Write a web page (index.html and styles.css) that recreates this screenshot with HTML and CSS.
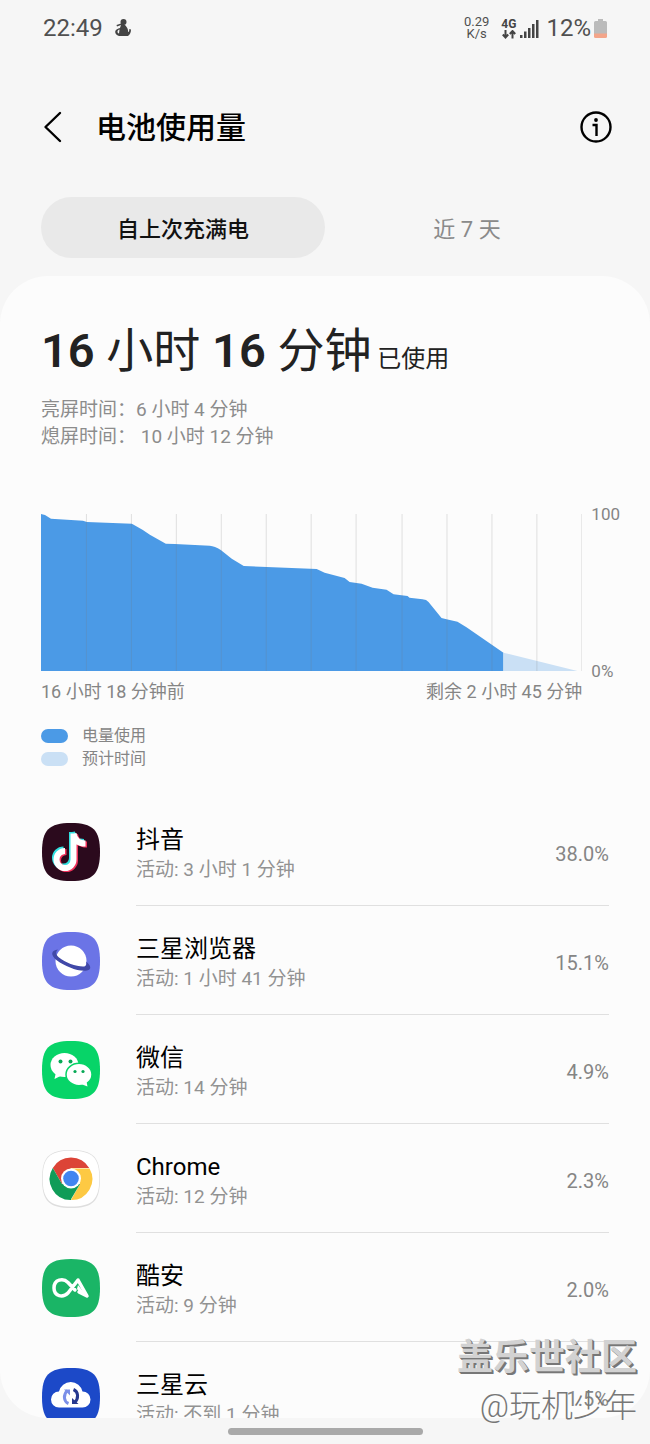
FILE: index.html
```html
<!DOCTYPE html>
<html lang="zh-CN">
<head>
<meta charset="utf-8">
<meta name="viewport" content="width=device-width, initial-scale=1">
<title>电池使用量</title>
<link rel="stylesheet" href="styles.css">
</head>
<body>
<div class="screen">
  <div class="status">
    <span class="clock">22:49</span>
    <svg class="notice" width="16" height="18" viewBox="0 0 16 18" aria-hidden="true"><circle cx="8.500" cy="3" r="3"/><path d="M1.500 6l6-2 3 2.500c1.500 2 3 4 2.500 6.500 1 0 1.300-1.300 1.300-3l1.700.5c0 3-1 5-3 6.500H4C1.500 16.500 0 14.500 .2 12.500S3 9.500 5 9l1-3-4 1.500z"/><path d="M2.500 12.500c0-1 1-2 2-2l-.5 4c-1 0-1.500-1-1.500-2z" fill="#f6f6f6"/></svg>
    <span class="speed">0.29<br>K/s</span>
    <span class="network">4G
      <svg width="14" height="9" viewBox="0 0 14 9" aria-hidden="true"><path d="M3.500 0v7M.8 4.500l2.700 3 2.700-3M10.500 8.500v-7M7.800 4l2.700-3 2.700 3" fill="none" stroke="#444" stroke-width="2"/></svg>
    </span>
    <svg class="signal" width="19" height="19" viewBox="0 0 19 19" aria-hidden="true"><path d="M0 16h2.500v3H0zM4 12.500h2.500V19H4zM8 9h2.500v10H8zM12 5h2.500v14H12zM16 1h2.500v18H16z" fill="#444"/></svg>
    <span class="level">12%</span>
    <svg width="13" height="19" viewBox="0 0 13 19" aria-hidden="true"><path d="M4 0h5v2h2.500a1.500 1.500 0 0 1 1.500 1.500V15H0V3.500A1.500 1.500 0 0 1 1.500 2H4z" fill="#bbb"/><path d="M0 14.500h13v3a1.500 1.500 0 0 1-1.500 1.500h-10A1.500 1.500 0 0 1 0 17.500z" fill="#f3a58a"/></svg>
  </div>

  <header class="bar">
    <button class="icon-button" type="button" aria-label="返回"><svg width="20" height="32" viewBox="0 0 20 32"><path d="M18 2L3.500 16 18 30" fill="none" stroke="#000" stroke-width="2.400" stroke-linecap="round" stroke-linejoin="round"/></svg></button>
    <h1 class="title">电池使用量</h1>
    <button class="icon-button" type="button" aria-label="信息"><svg width="32" height="32" viewBox="0 0 32 32"><circle cx="16" cy="16" r="14.500" fill="none" stroke="#000" stroke-width="2.400"/><circle cx="16" cy="9" r="1.900"/><path d="M12.500 14h4v11" fill="none" stroke="#000" stroke-width="2.400"/></svg></button>
  </header>

  <nav class="tabs">
    <button class="tab tab-active" type="button" aria-pressed="true">自上次充满电</button>
    <button class="tab" type="button" aria-pressed="false">近 7 天</button>
  </nav>

  <main class="card">
    <h2 class="total"><b>16</b> 小时 <b>16</b> 分钟<small> 已使用</small></h2>
    <p class="times">亮屏时间：6 小时 4 分钟<br>熄屏时间： 10 小时 12 分钟</p>

    <section class="chart">
      <svg class="plot" viewBox="0 0 542 157" preserveAspectRatio="none" role="img" aria-label="电量使用">
        <path d="M0 0L4 1 10 4.700 42 6.700 46 8 91 9.700 102 16 109 20.700 125 29.700 134 30 169 31.700Q174 32 180 36L191 44.700 203 52 226 53 276 55 284 58.700 304 64 309 68 321 69.700 332 73.700 346 75.700 353 80.300 367 82 369 83.700 382 85.300Q386 85.500 388 88L401 104 406 105.300 417 107.700 426 113.300 463 138.700V157H0z" fill="#4b9ae6"/>
        <path d="M463 138.700L537 157H463z" fill="#cae0f5"/>
        <path d="M45.500 0V157M90.500 0V157M135.500 0V157M180.500 0V157M225.500 0V157M270.500 0V157M315.500 0V157M361.500 0V157M406.500 0V157M451.500 0V157M496.500 0V157M541.500 0V157" stroke="#7a7a7a" stroke-opacity=".22"/>
      </svg>
      <div class="scale"><span>100</span><span>0%</span></div>
      <div class="range"><span>16 小时 18 分钟前</span><span>剩余 2 小时 45 分钟</span></div>
    </section>
    <ul class="legend">
      <li><i class="swatch"></i>电量使用</li>
      <li><i class="swatch swatch-light"></i>预计时间</li>
    </ul>

    <ul class="apps">
      <li class="app">
        <svg class="app-icon" viewBox="0 0 58 58" aria-hidden="true"><path d="M29 0C51 0 58 7 58 29S51 58 29 58 0 51 0 29 7 0 29 0z" fill="#2b0a1d"/><g fill="none" stroke-width="6"><path d="M31 10v26a8.500 8.500 0 1 1-8.500-8.500M31 10c1 7 5 10 12 10" stroke="#30dfe0" transform="translate(-1 -1)"/><path d="M31 10v26a8.500 8.500 0 1 1-8.500-8.500M31 10c1 7 5 10 12 10" stroke="#f0325b" transform="translate(2 1.500)"/><path d="M31 10v26a8.500 8.500 0 1 1-8.500-8.500M31 10c1 7 5 10 12 10" stroke="#fff" transform="translate(.5 .5)"/></g></svg>
        <div class="app-row"><div><h3 class="app-name">抖音</h3><p class="app-time">活动: 3 小时 1 分钟</p></div><span class="percent">38.0%</span></div>
      </li>
      <li class="app">
        <svg class="app-icon" viewBox="0 0 58 58" aria-hidden="true"><path d="M29 0C51 0 58 7 58 29S51 58 29 58 0 51 0 29 7 0 29 0z" fill="#6b74e6"/><circle cx="29" cy="29" r="15.500" fill="#fff"/><path d="M16 17.500C9 18 8 23 15 28.500c8 6 22 11.500 30 10 5-1 4-5-1-9 1 3 0 5-3 5-7 0-18-4-24-9-3-3-4-5-1-8z" fill="#4149a8"/></svg>
        <div class="app-row"><div><h3 class="app-name">三星浏览器</h3><p class="app-time">活动: 1 小时 41 分钟</p></div><span class="percent">15.1%</span></div>
      </li>
      <li class="app">
        <svg class="app-icon" viewBox="0 0 58 58" aria-hidden="true"><path d="M29 0C51 0 58 7 58 29S51 58 29 58 0 51 0 29 7 0 29 0z" fill="#07d468"/><ellipse cx="22.500" cy="24" rx="14" ry="12" fill="#fff"/><path d="M14 31l-1.500 7 7-3.500z" fill="#fff"/><ellipse cx="37" cy="33.500" rx="13" ry="11.200" fill="#fff" stroke="#07d468" stroke-width="1.500"/><path d="M39 43l6.500 2.500-1-5z" fill="#fff"/><g fill="#07a956"><circle cx="18.500" cy="20.500" r="2"/><circle cx="28.500" cy="20.500" r="2"/><circle cx="33" cy="30.500" r="1.600"/><circle cx="41" cy="30.500" r="1.600"/></g></svg>
        <div class="app-row"><div><h3 class="app-name">微信</h3><p class="app-time">活动: 14 分钟</p></div><span class="percent">4.9%</span></div>
      </li>
      <li class="app">
        <svg class="app-icon" viewBox="0 0 58 58" aria-hidden="true"><path d="M29 0C51 0 58 7 58 29S51 58 29 58 0 51 0 29 7 0 29 0z" fill="#dedede"/><path d="M29 .7C50.500 .7 57.300 7.500 57.300 28.500S50.500 56.500 29 56.500 .7 49.500 .7 28.500 7.500 .7 29 .7z" fill="#fff"/><path d="M10.800 18A21 21 0 0 1 47.200 18H29L20 34z" fill="#dc4437"/><path d="M10.800 18L20 34 29 39 29 50A21 21 0 0 1 10.800 18z" fill="#109c58"/><path d="M29 18.500H47.500A21 21 0 0 1 29 50L38 34z" fill="#fdc943"/><path d="M20 34l18 0-9.500 16z" fill="#109c58"/><circle cx="29" cy="28.500" r="10" fill="#fff"/><circle cx="29" cy="28.500" r="7.800" fill="#4285f0"/></svg>
        <div class="app-row"><div><h3 class="app-name">Chrome</h3><p class="app-time">活动: 12 分钟</p></div><span class="percent">2.3%</span></div>
      </li>
      <li class="app">
        <svg class="app-icon" viewBox="0 0 58 58" aria-hidden="true"><path d="M29 0C51 0 58 7 58 29S51 58 29 58 0 51 0 29 7 0 29 0z" fill="#1ab566"/><path d="M33 31L26 23.500c-5-5-14-3-14 5.500s9 10 14 5L36 21l9 16-8-4" fill="none" stroke="#fff" stroke-width="3.500" stroke-linecap="round" stroke-linejoin="round"/><path d="M36 26l-1 4 3 4 6 2z" fill="#fff"/></svg>
        <div class="app-row"><div><h3 class="app-name">酷安</h3><p class="app-time">活动: 9 分钟</p></div><span class="percent">2.0%</span></div>
      </li>
      <li class="app">
        <svg class="app-icon" viewBox="0 0 58 58" aria-hidden="true"><path d="M29 0C51 0 58 7 58 29S51 58 29 58 0 51 0 29 7 0 29 0z" fill="#1c49c8"/><path d="M17 39.500a8 8 0 0 1 0-16A12 12 0 0 1 40.500 23.500a8 8 0 0 1 0 16z" fill="#fff"/><g fill="none" stroke-width="3"><path d="M26.500 35.500c-5-2-5.500-9-1-13" stroke="#7b8fe8"/><path d="M31.500 21.500c5 2 5.500 9 1 13" stroke="#26388f"/></g><path d="M22 21.500h6v6z" fill="#7b8fe8"/><path d="M30 30v6h6.500z" fill="#26388f"/></svg>
        <div class="app-row"><div><h3 class="app-name">三星云</h3><p class="app-time">活动: 不到 1 分钟</p></div><span class="percent">1.5%</span></div>
      </li>
    </ul>
  </main>
  <div class="home"><span class="home-pill"></span></div>
  <div class="watermark"><span class="community">盖乐世社区</span><span class="author">@玩机少年</span></div>
</div>
</body>
</html>
```
FILE: styles.css
```css
* {
  box-sizing: border-box;
  margin: 0;
  padding: 0;
}

body {
  background: #f6f6f6;
  color: #000;
  font-family: Roboto, "Noto Sans CJK SC", sans-serif;
}

ul {
  list-style: none;
}

svg {
  display: block;
  flex: none;
}

button {
  border: 0;
  background: none;
  font: inherit;
}

.screen {
  position: relative;
  display: flex;
  flex-direction: column;
  height: 100vh;
}

.status {
  display: flex;
  flex: none;
  align-items: center;
  height: 56px;
  padding: 0 43px;
  color: #505050;
  font-size: 24px;
}

.notice {
  margin-left: 12px;
  fill: #444;
}

.speed {
  margin-left: auto;
  font-size: 13px;
  line-height: 12px;
  text-align: center;
}

.network {
  display: grid;
  justify-items: center;
  margin-left: 12px;
  color: #444;
  font-size: 12px;
  font-weight: 700;
  line-height: 12px;
}

.signal {
  margin: 0 7px 0 4px;
}

.level {
  margin-right: 3px;
}

.bar {
  display: flex;
  flex: none;
  align-items: center;
  height: 141px;
  padding: 0 38px 0 42px;
}

.title {
  flex: 1;
  margin-left: 34px;
  padding-bottom: 3px;
  font-size: 30px;
  font-weight: 500;
}

.tabs {
  display: grid;
  flex: none;
  grid-template-columns: 1fr 1fr;
  height: 61px;
  margin: 0 41px 18px;
}

.tab {
  padding-bottom: 2px;
  border-radius: 31px;
  color: #8a8a8a;
  font-size: 22px;
}

.tab-active {
  background: #e9e9e9;
  color: #111;
  font-weight: 500;
}

.card {
  flex: 1;
  min-height: 0;
  padding: 47px 41px 0;
  overflow: hidden;
  border-radius: 48px;
  background: #fcfcfc;
}

.total {
  color: #222;
  font-size: 47px;
  font-weight: 400;
  line-height: 56px;
}

.total b {
  font-weight: 600;
}

.total small {
  font-size: 24px;
  line-height: 1;
}

.times {
  margin-top: 17px;
  color: #8c8c8c;
  font-size: 19px;
  line-height: 27px;
}

.chart {
  display: grid;
  grid-template-columns: 1fr auto;
  gap: 9px;
  margin: 64px -11px 0 0;
  color: #858585;
  font-size: 17px;
}

.plot {
  width: 100%;
  height: 157px;
}

.scale {
  display: flex;
  flex-direction: column;
  justify-content: space-between;
  margin: -9px 0;
  line-height: 18px;
}

.range {
  display: flex;
  justify-content: space-between;
  font-size: 18px;
  line-height: 23px;
}

.legend {
  margin-top: 21px;
  color: #858585;
  font-size: 16px;
  line-height: 23px;
}

.legend li {
  display: flex;
  align-items: center;
}

.swatch {
  width: 27px;
  height: 14px;
  margin-right: 14px;
  border-radius: 7px;
  background: #4b9ae6;
}

.swatch-light {
  background: #cae0f5;
}

.apps {
  margin-top: 27px;
}

.app {
  display: flex;
  align-items: center;
}

.app-icon {
  width: 58px;
  height: 58px;
  margin: 0 36px 0 1px;
}

.app-row {
  display: flex;
  flex: 1;
  align-items: center;
  justify-content: space-between;
  padding: 27px 0 21px;
  border-bottom: 1px solid #e0e0e0;
}

.app-name {
  font-size: 24px;
  font-weight: 400;
  line-height: 32px;
}

.app-time {
  color: #929292;
  font-size: 19px;
  line-height: 28px;
}

.percent {
  color: #858585;
  font-size: 20px;
}

.home {
  display: grid;
  flex: none;
  place-items: center;
  height: 26px;
}

.home-pill {
  width: 30%;
  height: 7px;
  border-radius: 4px;
  background: #a9a9a9;
}

.watermark {
  position: absolute;
  right: 13px;
  bottom: 14px;
  display: grid;
  justify-items: end;
  line-height: 48px;
}

.community {
  color: #d2d2d2;
  font-size: 36px;
  font-weight: 700;
  text-shadow: 1px 1px #777, 2px 2px #777;
}

.author {
  color: #777;
  font-size: 32px;
  font-weight: 300;
}
```
